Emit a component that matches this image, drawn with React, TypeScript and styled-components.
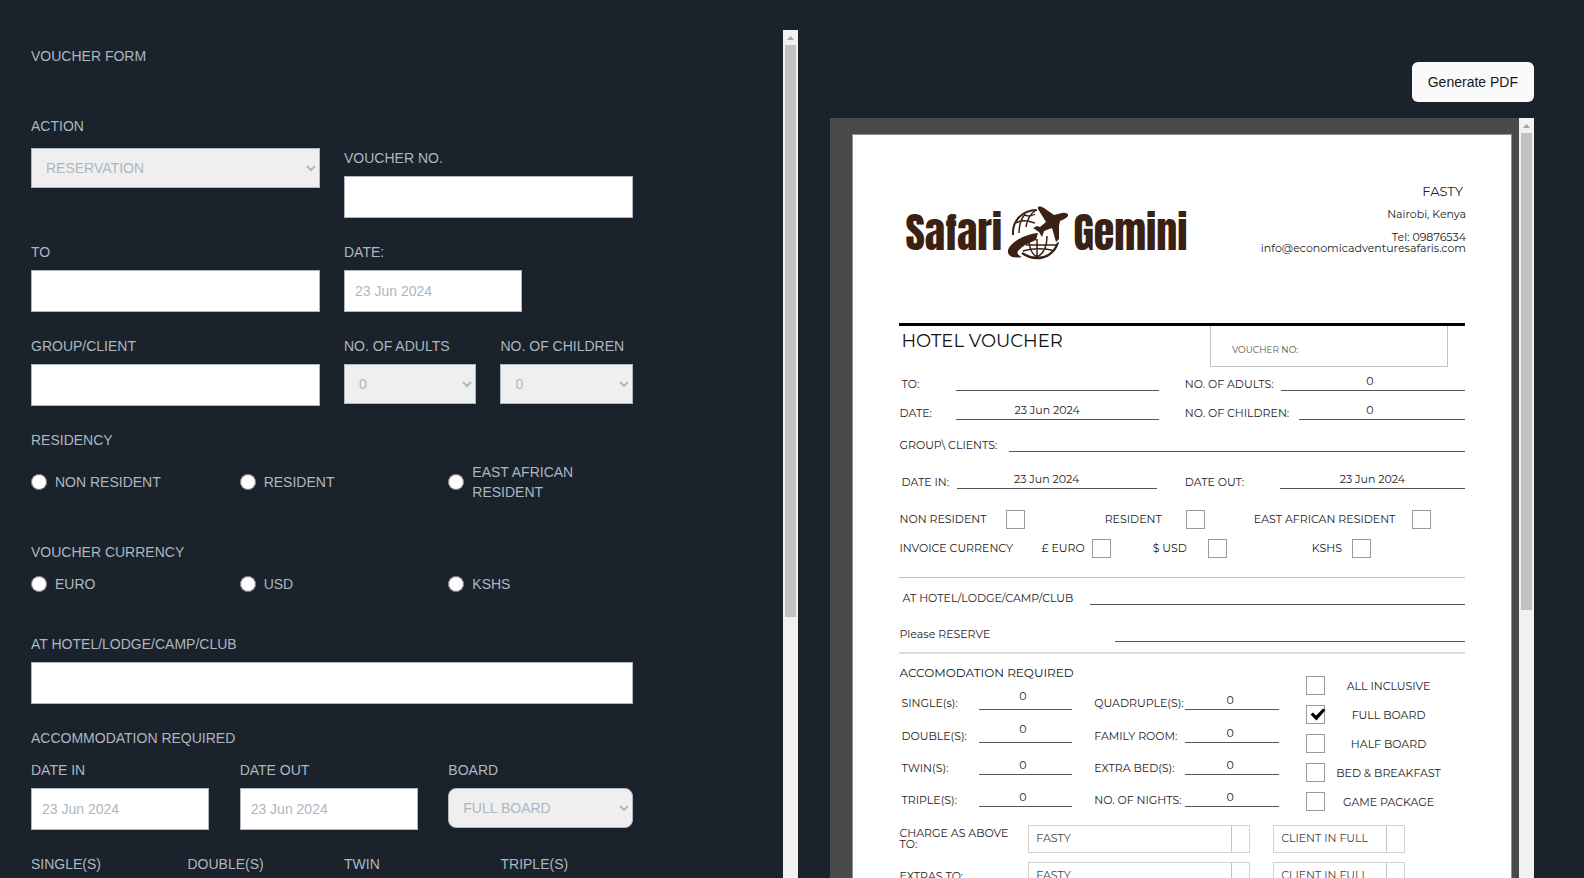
import React from "react";
import styled, { createGlobalStyle } from "styled-components";

const ink = "#222222";
const muted = "#aeb7c0";

const GlobalStyle = createGlobalStyle`
  *, *::before, *::after { box-sizing: border-box; }
  html, body { margin: 0; height: 100%; overflow: hidden; }
  body {
    background: #1a222c;
    color: ${muted};
    font-family: "Liberation Sans", Arial, sans-serif;
    font-size: 14px;
    line-height: 20px;
  }
  input, select, button { font: inherit; margin: 0; }
  h1, h2, p { margin: 0; font: inherit; }
`;

/* ---------- Shell ---------- */

const Shell = styled.main`
  display: grid;
  grid-template-columns: 12fr 11fr;
  gap: 32px;
  padding: 30px 50px 0 31px;
`;

const ScrollFrame = styled.div`
  display: flex;
  height: 100vh;
  min-width: 0;
`;

const ScrollContent = styled.div`
  flex: 1;
  min-width: 0;
  overflow: hidden;
`;

const Track = styled.div`
  flex: none;
  width: 15px;
  background: #f1f1f1;
  display: flex;
  flex-direction: column;
  align-items: center;
`;

const TrackArrow = styled.svg`
  width: 15px;
  height: 15px;
  flex: none;
`;

const Thumb = styled.div<{ $share: number }>`
  width: 11px;
  height: ${(p) => p.$share}%;
  background: #c1c1c1;
`;

function ScrollArea({ share, children }: { share: number; children: React.ReactNode }) {
  return (
    <ScrollFrame>
      <ScrollContent>{children}</ScrollContent>
      <Track aria-hidden="true">
        <TrackArrow viewBox="0 0 15 15">
          <path d="M4 10 L7.5 6 L11 10 Z" fill="#a3a3a3" />
        </TrackArrow>
        <Thumb $share={share} />
      </Track>
    </ScrollFrame>
  );
}

/* ---------- Voucher form ---------- */

const Form = styled.form`
  width: 80%;
  padding-top: 16px;
  display: flex;
  flex-direction: column;
`;

const FormTitle = styled.h1`
  margin-bottom: 50px;
`;

const Columns = styled.div<{ $count: number; $after?: number }>`
  display: grid;
  grid-template-columns: repeat(${(p) => p.$count}, minmax(0, 1fr));
  column-gap: 24px;
  align-items: start;
  margin-bottom: ${(p) => p.$after ?? 24}px;
`;

const Field = styled.div`
  display: flex;
  flex-direction: column;
  align-items: flex-start;
  gap: 8px;
`;

const Caption = styled.label<{ $after?: number }>`
  display: block;
  margin-bottom: ${(p) => p.$after ?? 0}px;
`;

const Legend = styled.h2`
  margin-bottom: 12px;
`;

const TextBox = styled.input<{ $short?: boolean }>`
  width: ${(p) => (p.$short ? "178px" : "100%")};
  max-width: 100%;
  height: 42px;
  padding: 0 10px;
  border: 1px solid ${muted};
  border-radius: 0;
  background: #ffffff;
  color: ${muted};
  outline: none;
`;

const Picker = styled.select<{ $rounded?: boolean }>`
  width: 100%;
  height: 40px;
  padding: 0 0 0 10px;
  border: 1px solid ${muted};
  border-radius: ${(p) => (p.$rounded ? 8 : 0)}px;
  background: #efefef;
  color: ${muted};
`;

const Choice = styled.label<{ $tall?: boolean }>`
  display: flex;
  align-items: center;
  gap: 8px;
  min-height: ${(p) => (p.$tall ? 40 : 20)}px;
  max-width: 136px;

  input {
    flex: none;
    width: 16px;
    height: 16px;
  }
`;

function VoucherForm() {
  return (
    <Form>
      <FormTitle>VOUCHER FORM</FormTitle>

      <Caption htmlFor="action" $after={12}>ACTION</Caption>
      <Columns $count={2}>
        <Picker id="action" defaultValue="RESERVATION">
          <option>RESERVATION</option>
        </Picker>
        <Field>
          <Caption htmlFor="voucher-no">VOUCHER NO.</Caption>
          <TextBox id="voucher-no" />
        </Field>
      </Columns>

      <Columns $count={2}>
        <Field>
          <Caption htmlFor="to">TO</Caption>
          <TextBox id="to" />
        </Field>
        <Field>
          <Caption htmlFor="date">DATE:</Caption>
          <TextBox id="date" $short defaultValue="23 Jun 2024" />
        </Field>
      </Columns>

      <Columns $count={2}>
        <Field>
          <Caption htmlFor="group">GROUP/CLIENT</Caption>
          <TextBox id="group" />
        </Field>
        <Columns $count={2} $after={0}>
          <Field>
            <Caption htmlFor="adults">NO. OF ADULTS</Caption>
            <Picker id="adults">
              <option>0</option>
            </Picker>
          </Field>
          <Field>
            <Caption htmlFor="children">NO. OF CHILDREN</Caption>
            <Picker id="children">
              <option>0</option>
            </Picker>
          </Field>
        </Columns>
      </Columns>

      <Legend id="residency">RESIDENCY</Legend>
      <Columns $count={3} $after={40} role="radiogroup" aria-labelledby="residency">
        {["NON RESIDENT", "RESIDENT", "EAST AFRICAN RESIDENT"].map((name) => (
          <Choice key={name} $tall>
            <input type="radio" name="residency" />
            {name}
          </Choice>
        ))}
      </Columns>

      <Legend id="currency">VOUCHER CURRENCY</Legend>
      <Columns $count={3} $after={40} role="radiogroup" aria-labelledby="currency">
        {["EURO", "USD", "KSHS"].map((name) => (
          <Choice key={name}>
            <input type="radio" name="currency" />
            {name}
          </Choice>
        ))}
      </Columns>

      <Caption htmlFor="hotel" $after={8}>AT HOTEL/LODGE/CAMP/CLUB</Caption>
      <Columns $count={1}>
        <TextBox id="hotel" />
      </Columns>

      <Legend>ACCOMMODATION REQUIRED</Legend>
      <Columns $count={3}>
        <Field>
          <Caption htmlFor="date-in">DATE IN</Caption>
          <TextBox id="date-in" $short defaultValue="23 Jun 2024" />
        </Field>
        <Field>
          <Caption htmlFor="date-out">DATE OUT</Caption>
          <TextBox id="date-out" $short defaultValue="23 Jun 2024" />
        </Field>
        <Field>
          <Caption htmlFor="board">BOARD</Caption>
          <Picker id="board" $rounded>
            <option>FULL BOARD</option>
          </Picker>
        </Field>
      </Columns>

      <Columns $count={4}>
        {["SINGLE(S)", "DOUBLE(S)", "TWIN", "TRIPLE(S)"].map((name, i) => (
          <Field key={name}>
            <Caption htmlFor={`room-${i}`}>{name}</Caption>
            <Picker id={`room-${i}`}>
              <option>0</option>
            </Picker>
          </Field>
        ))}
      </Columns>
    </Form>
  );
}

/* ---------- Voucher preview ---------- */

const Preview = styled.section`
  display: flex;
  flex-direction: column;
  align-items: flex-end;
  gap: 16px;
  padding-top: 32px;
  min-width: 0;

  ${ScrollFrame} { width: 100%; }
`;

const GenerateButton = styled.button`
  height: 40px;
  padding: 0 16px;
  border: 0;
  border-radius: 6px;
  background: #fafafa;
  color: #18181b;
`;

const Desk = styled.div`
  min-height: 100%;
  padding: 16px 7px 0 22px;
  background: #4a4a4a;
`;

const Paper = styled.article`
  min-height: 930px;
  padding: 48px 46px 0;
  border: 1px solid #8f8f8f;
  background: #ffffff;
  color: ${ink};
  font-family: Montserrat, Inter, sans-serif;
  font-size: 11px;
  line-height: 14px;
`;

const Letterhead = styled.header`
  display: flex;
  justify-content: space-between;
  height: 140px;
  margin-right: -1px;
`;

const Brand = styled.div`
  display: flex;
  align-items: center;
  justify-content: space-between;
  width: 294px;
  height: 66px;
  margin-top: 17px;
  padding: 0 6px;
  color: #3a2114;
  font-family: Impact, Anton, "DejaVu Sans Condensed", sans-serif;
  font-size: 42px;
  line-height: 66px;
  white-space: nowrap;

  svg { flex: none; }
`;

const Address = styled.address`
  font-style: normal;
  text-align: right;
`;

const Company = styled.p`
  padding-right: 3px;
  font-size: 13px;
  line-height: 16px;
`;

const AddressLine = styled.p<{ $before?: number }>`
  margin-top: ${(p) => p.$before ?? 0}px;
  line-height: 11px;
`;

const TitleBar = styled.div`
  display: flex;
  justify-content: space-between;
  border-top: 3px solid #000000;
  padding-right: 17px;
`;

const DocTitle = styled.h2`
  padding: 3px 0 0 2px;
  color: #111111;
  font-size: 18px;
  line-height: 24px;
`;

const NumberBox = styled.div`
  width: 238px;
  height: 41px;
  padding: 18px 21px 0;
  border: 1px solid #c4c4c4;
  border-top: 0;
  color: #555555;
  font-size: 9px;
  line-height: 12px;
`;

const spread = (cols: number[]) => cols.map((c) => `minmax(0, ${c}fr)`).join(" ");

const DocRow = styled.div<{ $cols: number[]; $height: number; $before?: number; $align?: string }>`
  display: grid;
  grid-template-columns: ${(p) => spread(p.$cols)};
  align-items: ${(p) => p.$align ?? "end"};
  height: ${(p) => p.$height}px;
  margin-top: ${(p) => p.$before ?? 0}px;
  white-space: nowrap;
`;

const Line = styled.span<{ $high?: boolean; $inset?: number }>`
  display: block;
  align-self: end;
  min-height: 1px;
  padding-bottom: ${(p) => (p.$high ? 6 : 2)}px;
  padding-right: ${(p) => p.$inset ?? 0}px;
  border-bottom: 1px solid #555555;
  text-align: center;
`;

const Rule = styled.hr<{ $before: number; $heavy?: boolean }>`
  margin: ${(p) => p.$before}px 0 0;
  border: 0;
  height: ${(p) => (p.$heavy ? 2 : 1)}px;
  background: ${(p) => (p.$heavy ? "#dcdcdc" : "#bdbdbd")};
`;

const SectionTitle = styled.h2`
  padding-top: 11px;
  color: #111111;
  font-size: 12px;
  line-height: 16px;
`;

const TickFrame = styled.span`
  position: relative;
  display: block;
  width: 19px;
  height: 19px;

  input {
    appearance: none;
    display: block;
    width: 19px;
    height: 19px;
    border: 1px solid #9a9a9a;
    background: #ffffff;
  }
  svg {
    position: absolute;
    left: 4px;
    top: 3px;
    width: 16px;
    height: 13px;
    pointer-events: none;
  }
`;

function Tick({ id, checked }: { id: string; checked?: boolean }) {
  return (
    <TickFrame>
      <input type="checkbox" id={id} checked={!!checked} readOnly />
      {checked && (
        <svg viewBox="0 0 16 13" aria-hidden="true">
          <path d="M0.5 6.5 L3 4.5 L6 7.5 L13 0.5 L15.5 2 L6.5 12.5 Z" fill="#000000" />
        </svg>
      )}
    </TickFrame>
  );
}

const Required = styled.div`
  display: grid;
  grid-template-columns: ${spread([402, 164])};
`;

const Boards = styled.div`
  display: grid;
  grid-template-columns: 19px 1fr;
  grid-auto-rows: 29px;
  align-items: center;
  padding: 17px 13px 0 5px;
  text-align: center;
  white-space: nowrap;
`;

const Payer = styled.div`
  display: grid;
  grid-template-columns: ${spread([129, 222, 23, 132, 60])};
  align-items: center;
  margin-top: 9px;
`;

const PayerLabel = styled.span`
  line-height: 11px;
`;

const SplitBox = styled.span`
  display: flex;
  height: 28px;
  border: 1px solid #d2d2d2;
  color: #444444;
  line-height: 24px;
  white-space: nowrap;

  span {
    flex: 1;
    padding-left: 7px;
  }
  i {
    width: 18px;
    border-left: 1px solid #c4c4c4;
  }
`;

function GlobeMark() {
  return (
    <svg width="60" height="54" viewBox="0 0 60 54" fill="none" stroke="#3a2114" strokeWidth="2" aria-hidden="true">
      <path d="M5 29 C4 15 14 4 29 4" />
      <path d="M8 17 C14 13 20 15 27 17 M17 8 C13 13 11 19 11 27 M28 4 C22 8 19 14 18 21 M17 9 C21 11 24 10 27 8" strokeWidth="1.5" />
      <path d="M50 36 C45 53 27 56 14 47" strokeWidth="2.4" />
      <path d="M18 39 H50 M29 33 V51 M21 36 C22 44 25 49 29 51 M39 30 C39 41 35 48 29 51 M15 45 C24 42 38 42 46 45" strokeWidth="1.5" />
      <path
        d="M30 27 C20 28 4 34 0 44 C-1 50 5 53 14 51 C9 49 8 46 12 43 C17 38 24 36 28 34 Z"
        fill="#3a2114"
        stroke="none"
      />
      <path
        d="M30 1 C32 0 34 1 36 2 L46 9 L54 7 C58 6 61 8 60 10 C59 12 56 13 52 15 L51 20 L51 33 L48 36 L44 22 L36 25 L34 31 L31 26 L25 22 L29 20 L32 21 L38 16 L30 3 Z"
        fill="#3a2114"
        stroke="#ffffff"
        strokeWidth="3"
        paintOrder="stroke"
        strokeLinejoin="round"
      />
    </svg>
  );
}

type Room = { left: string; right: string; height: number; high?: boolean };

const rooms: Room[] = [
  { left: "SINGLE(s):", right: "QUADRUPLE(S):", height: 29, high: true },
  { left: "DOUBLE(S):", right: "FAMILY ROOM:", height: 33, high: true },
  { left: "TWIN(S):", right: "EXTRA BED(S):", height: 32 },
  { left: "TRIPLE(S):", right: "NO. OF NIGHTS:", height: 32 },
];

const boards = ["ALL INCLUSIVE", "FULL BOARD", "HALF BOARD", "BED & BREAKFAST", "GAME PACKAGE"];

function VoucherDocument() {
  return (
    <Paper>
      <Letterhead>
        <Brand>
          <span>Safari</span>
          <GlobeMark />
          <span>Gemini</span>
        </Brand>
        <Address>
          <Company>FASTY</Company>
          <AddressLine $before={10}>Nairobi, Kenya</AddressLine>
          <AddressLine $before={12}>Tel: 09876534</AddressLine>
          <AddressLine>info@economicadventuresafaris.com</AddressLine>
        </Address>
      </Letterhead>

      <TitleBar>
        <DocTitle>HOTEL VOUCHER</DocTitle>
        <NumberBox>VOUCHER NO:</NumberBox>
      </TitleBar>

      <DocRow $cols={[2, 54, 203, 26, 96, 184]} $height={24}>
        <i />
        <span>TO:</span>
        <Line />
        <i />
        <span>NO. OF ADULTS:</span>
        <Line $inset={6}>0</Line>
      </DocRow>
      <DocRow $cols={[56, 203, 26, 114, 166]} $height={29}>
        <span>DATE:</span>
        <Line $inset={20}>23 Jun 2024</Line>
        <i />
        <span>NO. OF CHILDREN:</span>
        <Line $inset={24}>0</Line>
      </DocRow>
      <DocRow $cols={[109, 456]} $height={32}>
        <span>GROUP\ CLIENTS:</span>
        <Line />
      </DocRow>
      <DocRow $cols={[2, 55, 200, 28, 95, 185]} $height={37}>
        <i />
        <span>DATE IN:</span>
        <Line $inset={20}>23 Jun 2024</Line>
        <i />
        <span>DATE OUT:</span>
        <Line>23 Jun 2024</Line>
      </DocRow>

      <DocRow $cols={[106, 99, 81, 68, 158, 53]} $height={20} $before={20} $align="center">
        <label htmlFor="non-resident">NON RESIDENT</label>
        <Tick id="non-resident" />
        <label htmlFor="resident">RESIDENT</label>
        <Tick id="resident" />
        <label htmlFor="east-african">EAST AFRICAN RESIDENT</label>
        <Tick id="east-african" />
      </DocRow>
      <DocRow $cols={[142, 50, 61, 55, 104, 40, 113]} $height={20} $before={9} $align="center">
        <span>INVOICE CURRENCY</span>
        <label htmlFor="euro">£ EURO</label>
        <Tick id="euro" />
        <label htmlFor="usd">$ USD</label>
        <Tick id="usd" />
        <label htmlFor="kshs">KSHS</label>
        <Tick id="kshs" />
      </DocRow>
      <Rule $before={19} />

      <DocRow $cols={[3, 187, 375]} $height={27}>
        <i />
        <span>AT HOTEL/LODGE/CAMP/CLUB</span>
        <Line />
      </DocRow>
      <DocRow $cols={[215, 350]} $height={17} $before={20} $align="center">
        <span>Please RESERVE</span>
        <Line />
      </DocRow>
      <Rule $before={10} $heavy />

      <Required>
        <div>
          <SectionTitle>ACCOMODATION REQUIRED</SectionTitle>
          {rooms.map(({ left, right, height, high }) => (
            <DocRow key={left} $cols={[2, 78, 93, 22, 91, 94, 22]} $height={height}>
              <i />
              <span>{left}</span>
              <Line $high={high} $inset={6}>0</Line>
              <i />
              <span>{right}</span>
              <Line $inset={4}>0</Line>
            </DocRow>
          ))}
        </div>
        <Boards>
          {boards.map((name, i) => (
            <React.Fragment key={name}>
              <Tick id={`board-${i}`} checked={name === "FULL BOARD"} />
              <label htmlFor={`board-${i}`}>{name}</label>
            </React.Fragment>
          ))}
        </Boards>
      </Required>

      <Payer>
        <PayerLabel>CHARGE AS ABOVE TO:</PayerLabel>
        <SplitBox><span>FASTY</span><i /></SplitBox>
        <i />
        <SplitBox><span>CLIENT IN FULL</span><i /></SplitBox>
      </Payer>
      <Payer>
        <PayerLabel>EXTRAS TO:</PayerLabel>
        <SplitBox><span>FASTY</span><i /></SplitBox>
        <i />
        <SplitBox><span>CLIENT IN FULL</span><i /></SplitBox>
      </Payer>
    </Paper>
  );
}

export default function App() {
  return (
    <>
      <GlobalStyle />
      <Shell>
        <ScrollArea share={65.1}>
          <VoucherForm />
        </ScrollArea>
        <Preview>
          <GenerateButton type="button">Generate PDF</GenerateButton>
          <ScrollArea share={54.3}>
            <Desk>
              <VoucherDocument />
            </Desk>
          </ScrollArea>
        </Preview>
      </Shell>
    </>
  );
}
